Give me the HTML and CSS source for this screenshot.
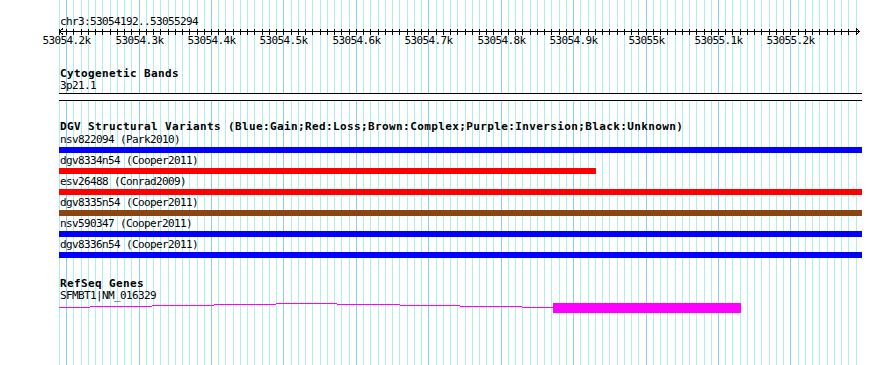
FILE: index.html
```html
<!DOCTYPE html>
<html>
<head>
    <title>GBrowse - chr3:53054192..53055294</title>
    <link rel="stylesheet" href="styles.css">
</head>
<body>
    <div class="browser">
        <svg id="grid" class="grid" width="890" height="365"></svg>

        <div class="panel">
            <div class="segment-name">chr3:53054192..53055294</div>

            <svg class="ruler" width="890" height="20">
                <g id="ticks"></g>
                <path class="ruler-line" d="M59 3.5 H860 M63 0.5 L59.5 3.5 L63 6.5 M856 0.5 L859.5 3.5 L856 6.5"/>
                <g class="ruler-labels">
                    <text x="66.5" y="16">53054.2k</text>
                    <text x="139.5" y="16">53054.3k</text>
                    <text x="211.5" y="16">53054.4k</text>
                    <text x="283.5" y="16">53054.5k</text>
                    <text x="356.5" y="16">53054.6k</text>
                    <text x="428.5" y="16">53054.7k</text>
                    <text x="501.5" y="16">53054.8k</text>
                    <text x="573.5" y="16">53054.9k</text>
                    <text x="646.5" y="16">53055k</text>
                    <text x="718.5" y="16">53055.1k</text>
                    <text x="790.5" y="16">53055.2k</text>
                </g>
            </svg>

            <div class="track">
                <div class="track-title">Cytogenetic Bands</div>
                <div class="feature-label">3p21.1</div>
                <div class="band"></div>
            </div>

            <div class="track">
                <div class="track-title">DGV Structural Variants (Blue:Gain;Red:Loss;Brown:Complex;Purple:Inversion;Black:Unknown)</div>
                <div class="features">
                    <div class="feature">
                        <div class="feature-label">nsv822094 (Park2010)</div>
                        <div class="bar gain"></div>
                    </div>
                    <div class="feature">
                        <div class="feature-label">dgv8334n54 (Cooper2011)</div>
                        <div class="bar loss" style="width: 537px"></div>
                    </div>
                    <div class="feature">
                        <div class="feature-label">esv26488 (Conrad2009)</div>
                        <div class="bar loss"></div>
                    </div>
                    <div class="feature">
                        <div class="feature-label">dgv8335n54 (Cooper2011)</div>
                        <div class="bar complex"></div>
                    </div>
                    <div class="feature">
                        <div class="feature-label">nsv590347 (Cooper2011)</div>
                        <div class="bar gain"></div>
                    </div>
                    <div class="feature">
                        <div class="feature-label">dgv8336n54 (Cooper2011)</div>
                        <div class="bar gain"></div>
                    </div>
                </div>
            </div>

            <div class="track">
                <div class="track-title">RefSeq Genes</div>
                <div class="feature-label">SFMBT1|NM_016329</div>
                <svg class="gene" width="803" height="12">
                    <path class="intron" d="M0 5.5 H31 M31 4.5 H93 M93 3.5 H155 M155 2.5 H217 M217 1.5 H278 M278 2.5 H341 M341 3.5 H401 M401 4.5 H463 M463 5.5 H494"/>
                    <rect class="exon" x="494" y="1" width="188" height="10"/>
                </svg>
            </div>
        </div>
    </div>

    <script src="script.js"></script>
</body>
</html>
```

FILE: styles.css
```css
body {
    margin: 0;
    background-color: white;
}
.browser {
    position: relative;
    width: 890px;
    height: 365px;
    overflow: hidden;
    background-color: white;
    font-family: "DejaVu Sans Mono", "Liberation Mono", monospace;
    color: black;
}
.grid {
    position: absolute;
    top: 0;
    left: 0;
    shape-rendering: crispEdges;
}
.grid .minor {
    stroke: #afeeee;
    stroke-width: 1;
}
.grid .major {
    stroke: #87cefa;
    stroke-width: 1;
}
.panel {
    position: relative;
    padding-top: 15px;
}
.segment-name {
    font-size: 11px;
    letter-spacing: -0.62px;
    line-height: 13px;
    height: 13px;
    padding-left: 60px;
    white-space: nowrap;
}
.ruler {
    display: block;
    shape-rendering: crispEdges;
}
.ruler-line,
.ruler .tick {
    stroke: black;
    stroke-width: 1;
    fill: none;
}
.ruler-labels text {
    font-family: "DejaVu Sans Mono", "Liberation Mono", monospace;
    font-size: 11px;
    letter-spacing: -0.62px;
    text-anchor: middle;
    fill: black;
}
.track {
    margin-top: 20px;
    padding-left: 59px;
}
.track-title {
    font-size: 11px;
    font-weight: bold;
    line-height: 12px;
    height: 12px;
    letter-spacing: 0.38px;
    padding-left: 1px;
    white-space: nowrap;
}
.feature-label {
    font-size: 11px;
    letter-spacing: -0.62px;
    line-height: 12px;
    height: 12px;
    padding-left: 1px;
    white-space: nowrap;
}
.band {
    width: 803px;
    height: 6px;
    margin-top: 1px;
    border-top: 1px solid black;
    border-bottom: 1px solid black;
    background-color: white;
}
.features {
    margin-top: 1px;
}
.feature {
    margin-bottom: 2px;
}
.bar {
    width: 803px;
    height: 6px;
    margin-top: 1px;
}
.gain {
    background-color: #0000ff;
}
.loss {
    background-color: #ff0000;
}
.complex {
    background-color: #8b4513;
}
.gene {
    display: block;
    shape-rendering: crispEdges;
}
.intron {
    stroke: #ff00ff;
    stroke-width: 1;
    fill: none;
}
.exon {
    fill: #ff00ff;
}
```

FILE: script.js
```js
// grid lines and ruler ticks, one every 10 bp
var NS = 'http://www.w3.org/2000/svg';
var START = 58.9;
var STEP = 7.243;
var COUNT = 111;

var grid = document.getElementById('grid');
var ticks = document.getElementById('ticks');

for (var k = 0; k < COUNT; k++) {
    var x = Math.round(START + k * STEP) + 0.5;

    var line = document.createElementNS(NS, 'line');
    line.setAttribute('x1', x);
    line.setAttribute('x2', x);
    line.setAttribute('y1', 0);
    line.setAttribute('y2', 365);
    line.setAttribute('class', k % 10 == 1 ? 'major' : 'minor');
    grid.appendChild(line);

    var tick = document.createElementNS(NS, 'line');
    tick.setAttribute('x1', x);
    tick.setAttribute('x2', x);
    tick.setAttribute('y1', 1);
    tick.setAttribute('y2', 7);
    tick.setAttribute('class', 'tick');
    ticks.appendChild(tick);
}
```
